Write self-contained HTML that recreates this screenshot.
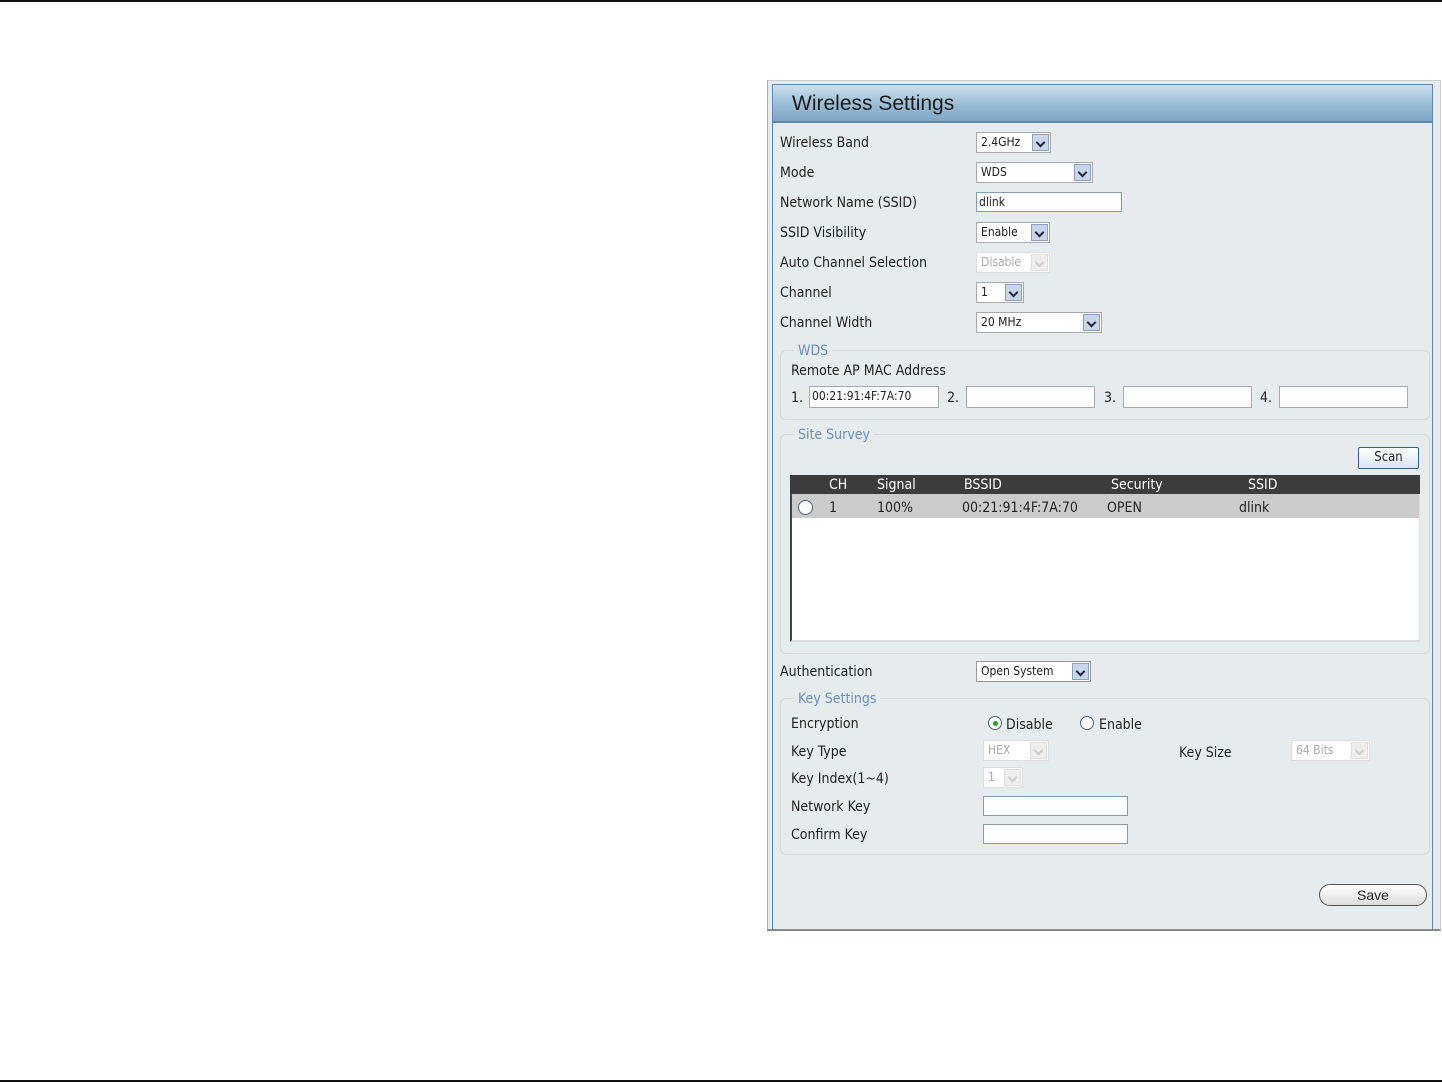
<!DOCTYPE html>
<html><head><meta charset="utf-8"><style>
*{margin:0;padding:0;box-sizing:border-box}
body{width:1442px;height:1083px;background:#fff;position:relative;overflow:hidden;font-family:"DejaVu Sans Condensed","Liberation Sans",sans-serif;color:#222}
.a{position:absolute}
.t{position:absolute;font-size:14px;white-space:nowrap;margin-top:1px}
.sel{position:absolute;height:21px;background:#fff;border:1px solid #a9a9a9;font-size:12px;padding:2px 0 0 4px}
.sel .b{position:absolute;right:1px;top:1px;width:17px;height:17px;background:#c9d6ea;border:1px solid #8aa0c8}
.sel .b:after{content:"";position:absolute;left:4px;top:4px;width:5px;height:5px;border-right:2px solid #224;border-bottom:2px solid #224;transform:rotate(45deg)}
.dis{color:#aaa;border-color:#ddd}
.dis .b{background:#eee;border-color:#ddd}
.dis .b:after{border-color:#ccc}
.inp{position:absolute;height:20px;background:#fff;border:1px solid #7f9db9;font-size:12px;padding:2px 2px}
.fs{position:absolute;border:1px solid #d4dadc;border-radius:6px}
.lg{position:absolute;font-size:14px;color:#6a8fc0;background:#e6ebed;padding:0 4px;margin-top:1px}
.radio{position:absolute;width:14px;height:14px;border-radius:50%;border:1px solid #44628a;background:#fff}
</style></head><body>
<div class="a" style="left:0;top:0;width:1442px;height:2px;background:#111"></div>
<div class="a" style="left:0;top:1080px;width:1442px;height:2px;background:#111"></div>

<div class="a" style="left:767px;top:80px;width:674px;height:851px;background:#e6ebed;border-left:1px solid #aaa;border-bottom:2px solid #888;border-top:1px solid #ccc;border-right:1px solid #ccc"></div>
<div class="a" style="left:772px;top:84px;width:661px;height:845px;border:1px solid #5e89b3;border-bottom:none"></div>
<div class="a" style="left:773px;top:85px;width:659px;height:38px;background:linear-gradient(#cde0ee,#94b9d3 60%,#7fa7c6);border-bottom:2px solid #5b86b0"></div>
<div class="t" style="left:792px;top:91px;font-family:'Liberation Sans',sans-serif;font-size:21px;color:#1a1a1a">Wireless Settings</div>

<div class="t" style="left:780px;top:134px">Wireless Band</div>
<div class="sel" style="left:976px;top:132px;width:75px">2.4GHz<div class="b"></div></div>
<div class="t" style="left:780px;top:164px">Mode</div>
<div class="sel" style="left:976px;top:162px;width:117px">WDS<div class="b"></div></div>
<div class="t" style="left:780px;top:194px">Network Name (SSID)</div>
<div class="inp" style="left:976px;top:192px;width:146px">dlink</div>
<div class="t" style="left:780px;top:224px">SSID Visibility</div>
<div class="sel" style="left:976px;top:222px;width:74px">Enable<div class="b"></div></div>
<div class="t" style="left:780px;top:254px">Auto Channel Selection</div>
<div class="sel dis" style="left:976px;top:252px;width:74px">Disable<div class="b"></div></div>
<div class="t" style="left:780px;top:284px">Channel</div>
<div class="sel" style="left:976px;top:282px;width:48px">1<div class="b"></div></div>
<div class="t" style="left:780px;top:314px">Channel Width</div>
<div class="sel" style="left:976px;top:312px;width:126px">20 MHz<div class="b"></div></div>

<div class="fs" style="left:780px;top:350px;width:650px;height:70px"></div>
<div class="lg" style="left:794px;top:342px">WDS</div>
<div class="t" style="left:791px;top:362px">Remote AP MAC Address</div>
<div class="t" style="left:791px;top:389px">1.</div>
<div class="inp" style="left:809px;top:386px;width:130px;height:22px;border-color:#aaa">00:21:91:4F:7A:70</div>
<div class="t" style="left:947px;top:389px">2.</div>
<div class="inp" style="left:966px;top:386px;width:129px;height:22px;border-color:#aaa"></div>
<div class="t" style="left:1104px;top:389px">3.</div>
<div class="inp" style="left:1123px;top:386px;width:129px;height:22px;border-color:#aaa"></div>
<div class="t" style="left:1260px;top:389px">4.</div>
<div class="inp" style="left:1279px;top:386px;width:129px;height:22px;border-color:#aaa"></div>

<div class="fs" style="left:780px;top:434px;width:650px;height:220px"></div>
<div class="lg" style="left:794px;top:426px">Site Survey</div>
<div class="a" style="left:1358px;top:447px;width:61px;height:22px;border:1px solid #3b5d8f;border-radius:2px;background:linear-gradient(#fff,#dde4ee);font-size:13px;text-align:center;line-height:20px">Scan</div>
<div class="a" style="left:790px;top:475px;width:630px;height:167px;background:#fff;border-left:2px solid #444;border-bottom:2px solid #ddd;border-right:1px solid #ddd"></div>
<div class="a" style="left:790px;top:475px;width:630px;height:19px;background:#3c3c3c"></div>
<div class="a" style="left:792px;top:494px;width:627px;height:24px;background:#cbcbcb"></div>
<div class="t" style="left:829px;top:476px;color:#fff">CH</div>
<div class="t" style="left:877px;top:476px;color:#fff">Signal</div>
<div class="t" style="left:964px;top:476px;color:#fff">BSSID</div>
<div class="t" style="left:1111px;top:476px;color:#fff">Security</div>
<div class="t" style="left:1248px;top:476px;color:#fff">SSID</div>
<div class="radio" style="left:798px;top:500px;width:15px;height:15px"></div>
<div class="t" style="left:829px;top:499px">1</div>
<div class="t" style="left:877px;top:499px">100%</div>
<div class="t" style="left:962px;top:499px">00:21:91:4F:7A:70</div>
<div class="t" style="left:1107px;top:499px">OPEN</div>
<div class="t" style="left:1239px;top:499px">dlink</div>

<div class="t" style="left:780px;top:663px">Authentication</div>
<div class="sel" style="left:976px;top:661px;width:115px;border-color:#999">Open System<div class="b"></div></div>

<div class="fs" style="left:780px;top:698px;width:650px;height:157px"></div>
<div class="lg" style="left:794px;top:690px">Key Settings</div>
<div class="t" style="left:791px;top:715px">Encryption</div>
<div class="radio" style="left:988px;top:716px"></div>
<div class="a" style="left:993px;top:721px;width:5px;height:5px;border-radius:50%;background:#2a2"></div>
<div class="t" style="left:1006px;top:716px">Disable</div>
<div class="radio" style="left:1080px;top:716px"></div>
<div class="t" style="left:1099px;top:716px">Enable</div>
<div class="t" style="left:791px;top:743px">Key Type</div>
<div class="sel dis" style="left:983px;top:740px;width:66px">HEX<div class="b"></div></div>
<div class="t" style="left:1179px;top:744px">Key Size</div>
<div class="sel dis" style="left:1291px;top:740px;width:79px">64 Bits<div class="b"></div></div>
<div class="t" style="left:791px;top:770px">Key Index(1~4)</div>
<div class="sel dis" style="left:983px;top:767px;width:40px">1<div class="b"></div></div>
<div class="t" style="left:791px;top:798px">Network Key</div>
<div class="inp" style="left:983px;top:796px;width:145px"></div>
<div class="t" style="left:791px;top:826px">Confirm Key</div>
<div class="inp" style="left:983px;top:824px;width:145px"></div>

<div class="a" style="left:1319px;top:884px;width:108px;height:22px;border:1px solid #555;border-radius:11px;background:linear-gradient(#fff,#dcdcdc);font-family:'Liberation Sans',sans-serif;font-size:14px;text-align:center;line-height:20px">Save</div>
</body></html>
